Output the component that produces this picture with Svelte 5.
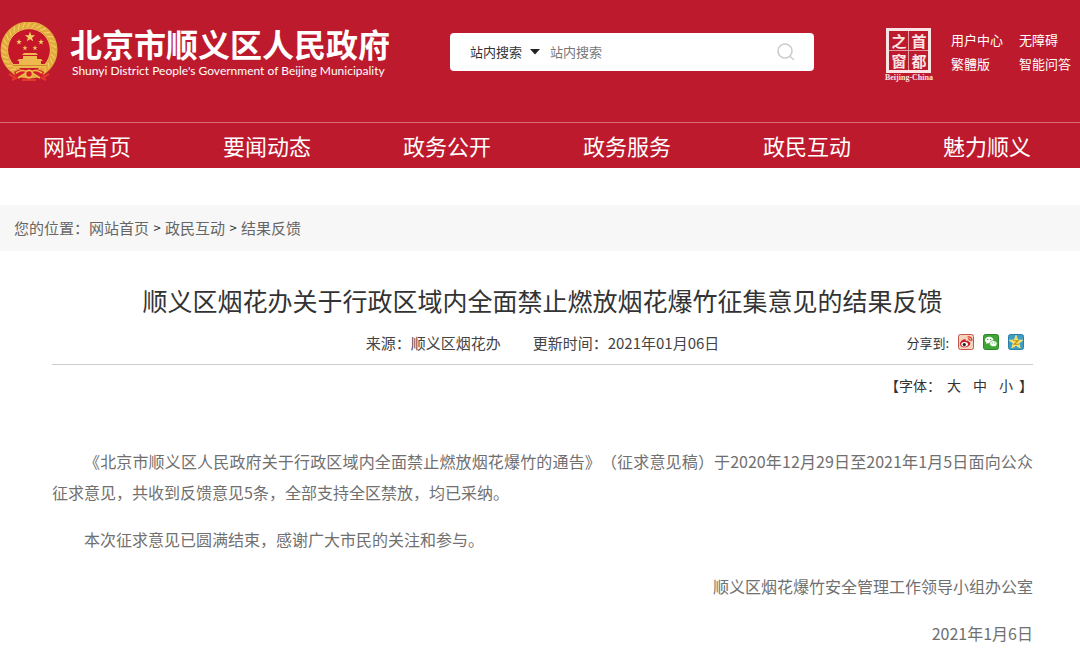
<script>
  const star = (cx, cy, r) =>
    Array.from({ length: 10 }, (_, i) => {
      const a = -Math.PI / 2 + (i * Math.PI) / 5;
      const k = i % 2 ? r * 0.4 : r;
      return `${(cx + k * Math.cos(a)).toFixed(2)},${(cy + k * Math.sin(a)).toFixed(2)}`;
    }).join(' ');

  const nav = ['网站首页', '要闻动态', '政务公开', '政务服务', '政民互动', '魅力顺义'];
  const tools = ['用户中心', '无障碍', '繁體版', '智能问答'];
  const ears = Array.from({ length: 25 }, (_, i) => 130 + i * 11.7);
</script>

<header>
  <div class="top">
    <a class="brand" href="#home">
      <svg class="emblem" viewBox="0 0 58 60" aria-hidden="true">
        <circle cx="29" cy="28" r="25" fill="#c5162a" />
        <circle cx="29" cy="28" r="25" fill="none" stroke="#e2a93d" stroke-width="7" />
        <g stroke="#f3cd62" stroke-width="1.2" stroke-linecap="round">
          {#each ears as a}
            <path d="M52 26l4 3" transform={`rotate(${a} 29 28)`} />
          {/each}
        </g>
        <circle cx="29" cy="28" r="21.4" fill="none" stroke="#f1c555" stroke-width="1" />
        <g fill="#f6cf63">
          <polygon points={star(30, 15, 5.4)} />
          <polygon points={star(19, 20, 3)} />
          <polygon points={star(41, 20, 3)} />
          <polygon points={star(25, 26, 2.7)} />
          <polygon points={star(35, 26, 2.7)} />
        </g>
        <path d="M22 33l2-2h12l2 2zM23 34h14v3H23zM19 37h22l2 2H17zM19 39h22v3H19zM13 42h33v4H13z" fill="#edb94e" />
        <path d="M13 43.5h33" stroke="#d38a2d" stroke-width="1" />
        <path d="M14 50q7-5 15-1 8-4 15 1l-3 6q-6-5-12-2-6-3-12 2z" fill="#d21f28" />
        <path d="M16 51q7-5 13 0 6-5 13 0M18 56l8-5M40 56l-8-5" fill="none" stroke="#f0bd4d" stroke-width="1.6" />
        <circle cx="29" cy="52" r="3.6" fill="#d21f28" stroke="#f0bd4d" stroke-width="1.8" />
        <path d="M9 52l7 4-4 2M49 52l-7 4 4 2M22 58h14" fill="none" stroke="#e3392c" stroke-width="2.2" />
      </svg>
      <span class="names">
        <strong>北京市顺义区人民政府</strong>
        <span class="latin">Shunyi District People's Government of Beijing Municipality</span>
      </span>
    </a>

    <form class="search" role="search">
      <select aria-label="搜索范围">
        <option>站内搜索</option>
      </select>
      <svg class="caret" viewBox="0 0 10 6" aria-hidden="true"><path d="M0 0h10L5 5.5z" fill="#222" /></svg>
      <input type="text" placeholder="站内搜索" aria-label="站内搜索" />
      <button type="button" aria-label="搜索">
        <svg viewBox="0 0 20 20" fill="none" stroke="#ccc" stroke-width="1.6" aria-hidden="true">
          <circle cx="9" cy="9" r="7" /><path d="M14 14.500l3.500 3" stroke-linecap="round" />
        </svg>
      </button>
    </form>

    <a class="window" href="#capital">
      <span class="seal"><span>之</span><span>首</span><span>窗</span><span>都</span></span>
      <span class="caption">Beijing-China</span>
    </a>

    <div class="tools">
      {#each tools as t}<a href="#tool">{t}</a>{/each}
    </div>
  </div>
  <nav>
    {#each nav as n}<a href="#nav">{n}</a>{/each}
  </nav>
</header>

<div class="crumbs">
  <span>您的位置：</span><a href="#home">网站首页</a><b>&gt;</b><a href="#nav">政民互动</a><b>&gt;</b><a href="#result">结果反馈</a>
</div>

<main>
  <h1>顺义区烟花办关于行政区域内全面禁止燃放烟花爆竹征集意见的结果反馈</h1>
  <div class="meta">
    <div class="facts">
      <span>来源：顺义区烟花办</span>
      <span>更新时间：2021年01月06日</span>
    </div>
    <div class="share">
      <span>分享到:</span>
      <a href="#weibo" aria-label="微博">
        <svg viewBox="0 0 16 16">
          <rect x=".5" y=".5" width="15" height="15" rx="2" fill="#f6d3bd" stroke="#c6554a" />
          <path d="M2 10c0-3 4-5.500 5.500-4.500.8.500.2 1.500.2 1.500s3-1 3 .7c2 .6 2 2 1 3.300C9 14.500 2 14 2 10z" fill="#c8202b" />
          <ellipse cx="6.600" cy="10.300" rx="3.300" ry="2.300" fill="#fff" />
          <circle cx="6.300" cy="10.500" r="1.600" fill="#222" />
          <path d="M9.500 3c3-.6 5 1.500 4.200 4.200M10 5c1.500-.2 2.300.6 2 2" fill="none" stroke="#db3429" stroke-width="1.200" />
        </svg>
      </a>
      <a href="#wechat" aria-label="微信">
        <svg viewBox="0 0 16 16">
          <rect x=".5" y=".5" width="15" height="15" rx="2" fill="#3fa535" stroke="#2b8429" />
          <path d="M6.200 2.800C3.700 2.800 2 4.300 2 6.100c0 1.100.6 2 1.500 2.600L3.200 10l1.500-.8c2.800.5 5.700-.8 5.700-3.100 0-1.800-1.700-3.300-4.200-3.300z" fill="#fff" />
          <path d="M10.400 6.700c-2.200 0-3.800 1.300-3.800 3s2 3.400 5 2.800l1.400.8-.3-1.300c.9-.5 1.400-1.300 1.400-2.300 0-1.700-1.600-3-3.700-3z" fill="#fff" stroke="#3fa535" stroke-width=".7" />
          <g fill="#3fa535"><circle cx="4.800" cy="5.400" r=".7" /><circle cx="7.600" cy="5.400" r=".7" /><circle cx="9.200" cy="9" r=".6" /><circle cx="11.700" cy="9" r=".6" /></g>
        </svg>
      </a>
      <a href="#qzone" aria-label="QQ空间">
        <svg viewBox="0 0 16 16">
          <rect x=".5" y=".5" width="15" height="15" rx="2" fill="#3b9fc6" stroke="#2b7fa9" />
          <polygon points={star(8, 8.4, 7)} fill="#fbe36a" stroke="#fbe36a" stroke-linejoin="round" />
          <path d="M5.500 6.700h4.600L6.200 10.300h4.600" fill="none" stroke="#b88a1c" stroke-width="1.100" />
        </svg>
      </a>
    </div>
  </div>
  <div class="sizes">
    <span>【字体：</span><button type="button">大</button><button type="button">中</button><button type="button">小</button><span>】</span>
  </div>

  <article>
    <p>《北京市顺义区人民政府关于行政区域内全面禁止燃放烟花爆竹的通告》（征求意见稿）于2020年12月29日至2021年1月5日面向公众征求意见，共收到反馈意见5条，全部支持全区禁放，均已采纳。</p>
    <p>本次征求意见已圆满结束，感谢广大市民的关注和参与。</p>
    <p class="sign">顺义区烟花爆竹安全管理工作领导小组办公室</p>
    <p class="sign">2021年1月6日</p>
  </article>
</main>

<style>
  :global(body) {
    margin: 0;
    background: #fff;
    color: #333;
    font-family: 'Noto Sans CJK SC', sans-serif;
    text-spacing-trim: space-all;
  }
  a { color: inherit; text-decoration: none; }
  button, select, input { font: inherit; color: inherit; border: 0; padding: 0; margin: 0; background: none; }

  header { background: #be1a2d; color: #fff; }
  .top { display: flex; align-items: flex-start; height: 122px; }
  .brand { display: flex; gap: 12px; padding-top: 22px; }
  .emblem { width: 58px; height: 60px; flex: none; }
  .names { display: flex; flex-direction: column; white-space: nowrap; }
  .names strong { font-size: 32px; line-height: 42px; }
  .latin { font: 12px/14px Lato, sans-serif; padding-left: 2px; }

  .search {
    display: flex; align-items: center; flex: 0 1 364px; height: 38px; box-sizing: border-box;
    margin: 33px 0 0 60px; padding: 0 18px 0 20px;
    background: #fff; border-radius: 4px; font-size: 13px; color: #333;
  }
  .search select { appearance: none; width: 60px; line-height: 20px; }
  .caret { width: 10px; height: 6px; flex: none; }
  .search input { flex: 1; min-width: 0; margin-left: 10px; outline: 0; line-height: 20px; }
  .search input::placeholder { color: #777; opacity: 1; }
  .search button { width: 20px; height: 20px; }
  .search button svg { display: block; }

  .window { display: flex; flex-direction: column; align-items: center; margin: 28px 0 0 auto; }
  .seal {
    display: grid; grid-template-columns: 19px 19px; grid-template-rows: 19px 19px; gap: 1px;
    border: 3px solid #fbe4e4; width: 39px; height: 39px;
    background: linear-gradient(#e79aa2, #e79aa2) 19px 0 / 1px 100% no-repeat,
      linear-gradient(#e79aa2, #e79aa2) 0 19px / 100% 1px no-repeat;
  }
  .seal span { font-size: 15px; line-height: 19px; font-weight: 700; text-align: center; color: #fbe4e4; }
  .caption { font: bold 8px/9px 'Liberation Serif', serif; color: #fbe4e4; }

  .tools {
    display: grid; grid-template-columns: 52px 52px; column-gap: 16px; grid-auto-rows: 24px;
    padding: 28px 9px 0 18px; font-size: 13px; line-height: 24px; white-space: nowrap;
  }

  nav { display: grid; grid-template-columns: repeat(6, 1fr); border-top: 1px solid #df6d79; }
  nav a { padding-left: 43px; font-size: 22px; line-height: 45px; white-space: nowrap; }

  .crumbs {
    display: flex; margin-top: 37px; padding: 0 14px; background: #f7f7f8;
    font-size: 15px; line-height: 46px; color: #666;
  }
  .crumbs b { width: 16px; text-align: center; font-weight: 400; font-size: 13px; color: #333; }

  main { padding: 31px 47px 0 52px; }
  h1 { margin: 0; font-size: 25px; line-height: 36px; font-weight: 400; text-align: center; color: #333; }
  .meta {
    display: grid; grid-template-columns: 1fr auto 1fr; align-items: center;
    margin-top: 5px; height: 38px; padding-bottom: 3px; border-bottom: 1px solid #ccc;
  }
  .facts { grid-column: 2; display: flex; gap: 32px; font-size: 15px; color: #444; }
  .share { display: flex; align-items: center; justify-content: flex-end; gap: 9px; padding-right: 9px; font-size: 13px; }
  .share a, .share svg { display: block; width: 16px; height: 16px; }
  .sizes { display: flex; justify-content: flex-end; font-size: 14px; line-height: 40px; }
  .sizes button { width: 26px; text-align: center; }

  article { padding-top: 41px; font-size: 16px; line-height: 31px; color: #707070; }
  p { margin: 0 0 16px; text-indent: 2em; text-align: justify; }
  .sign { text-align: right; text-indent: 0; }
</style>
